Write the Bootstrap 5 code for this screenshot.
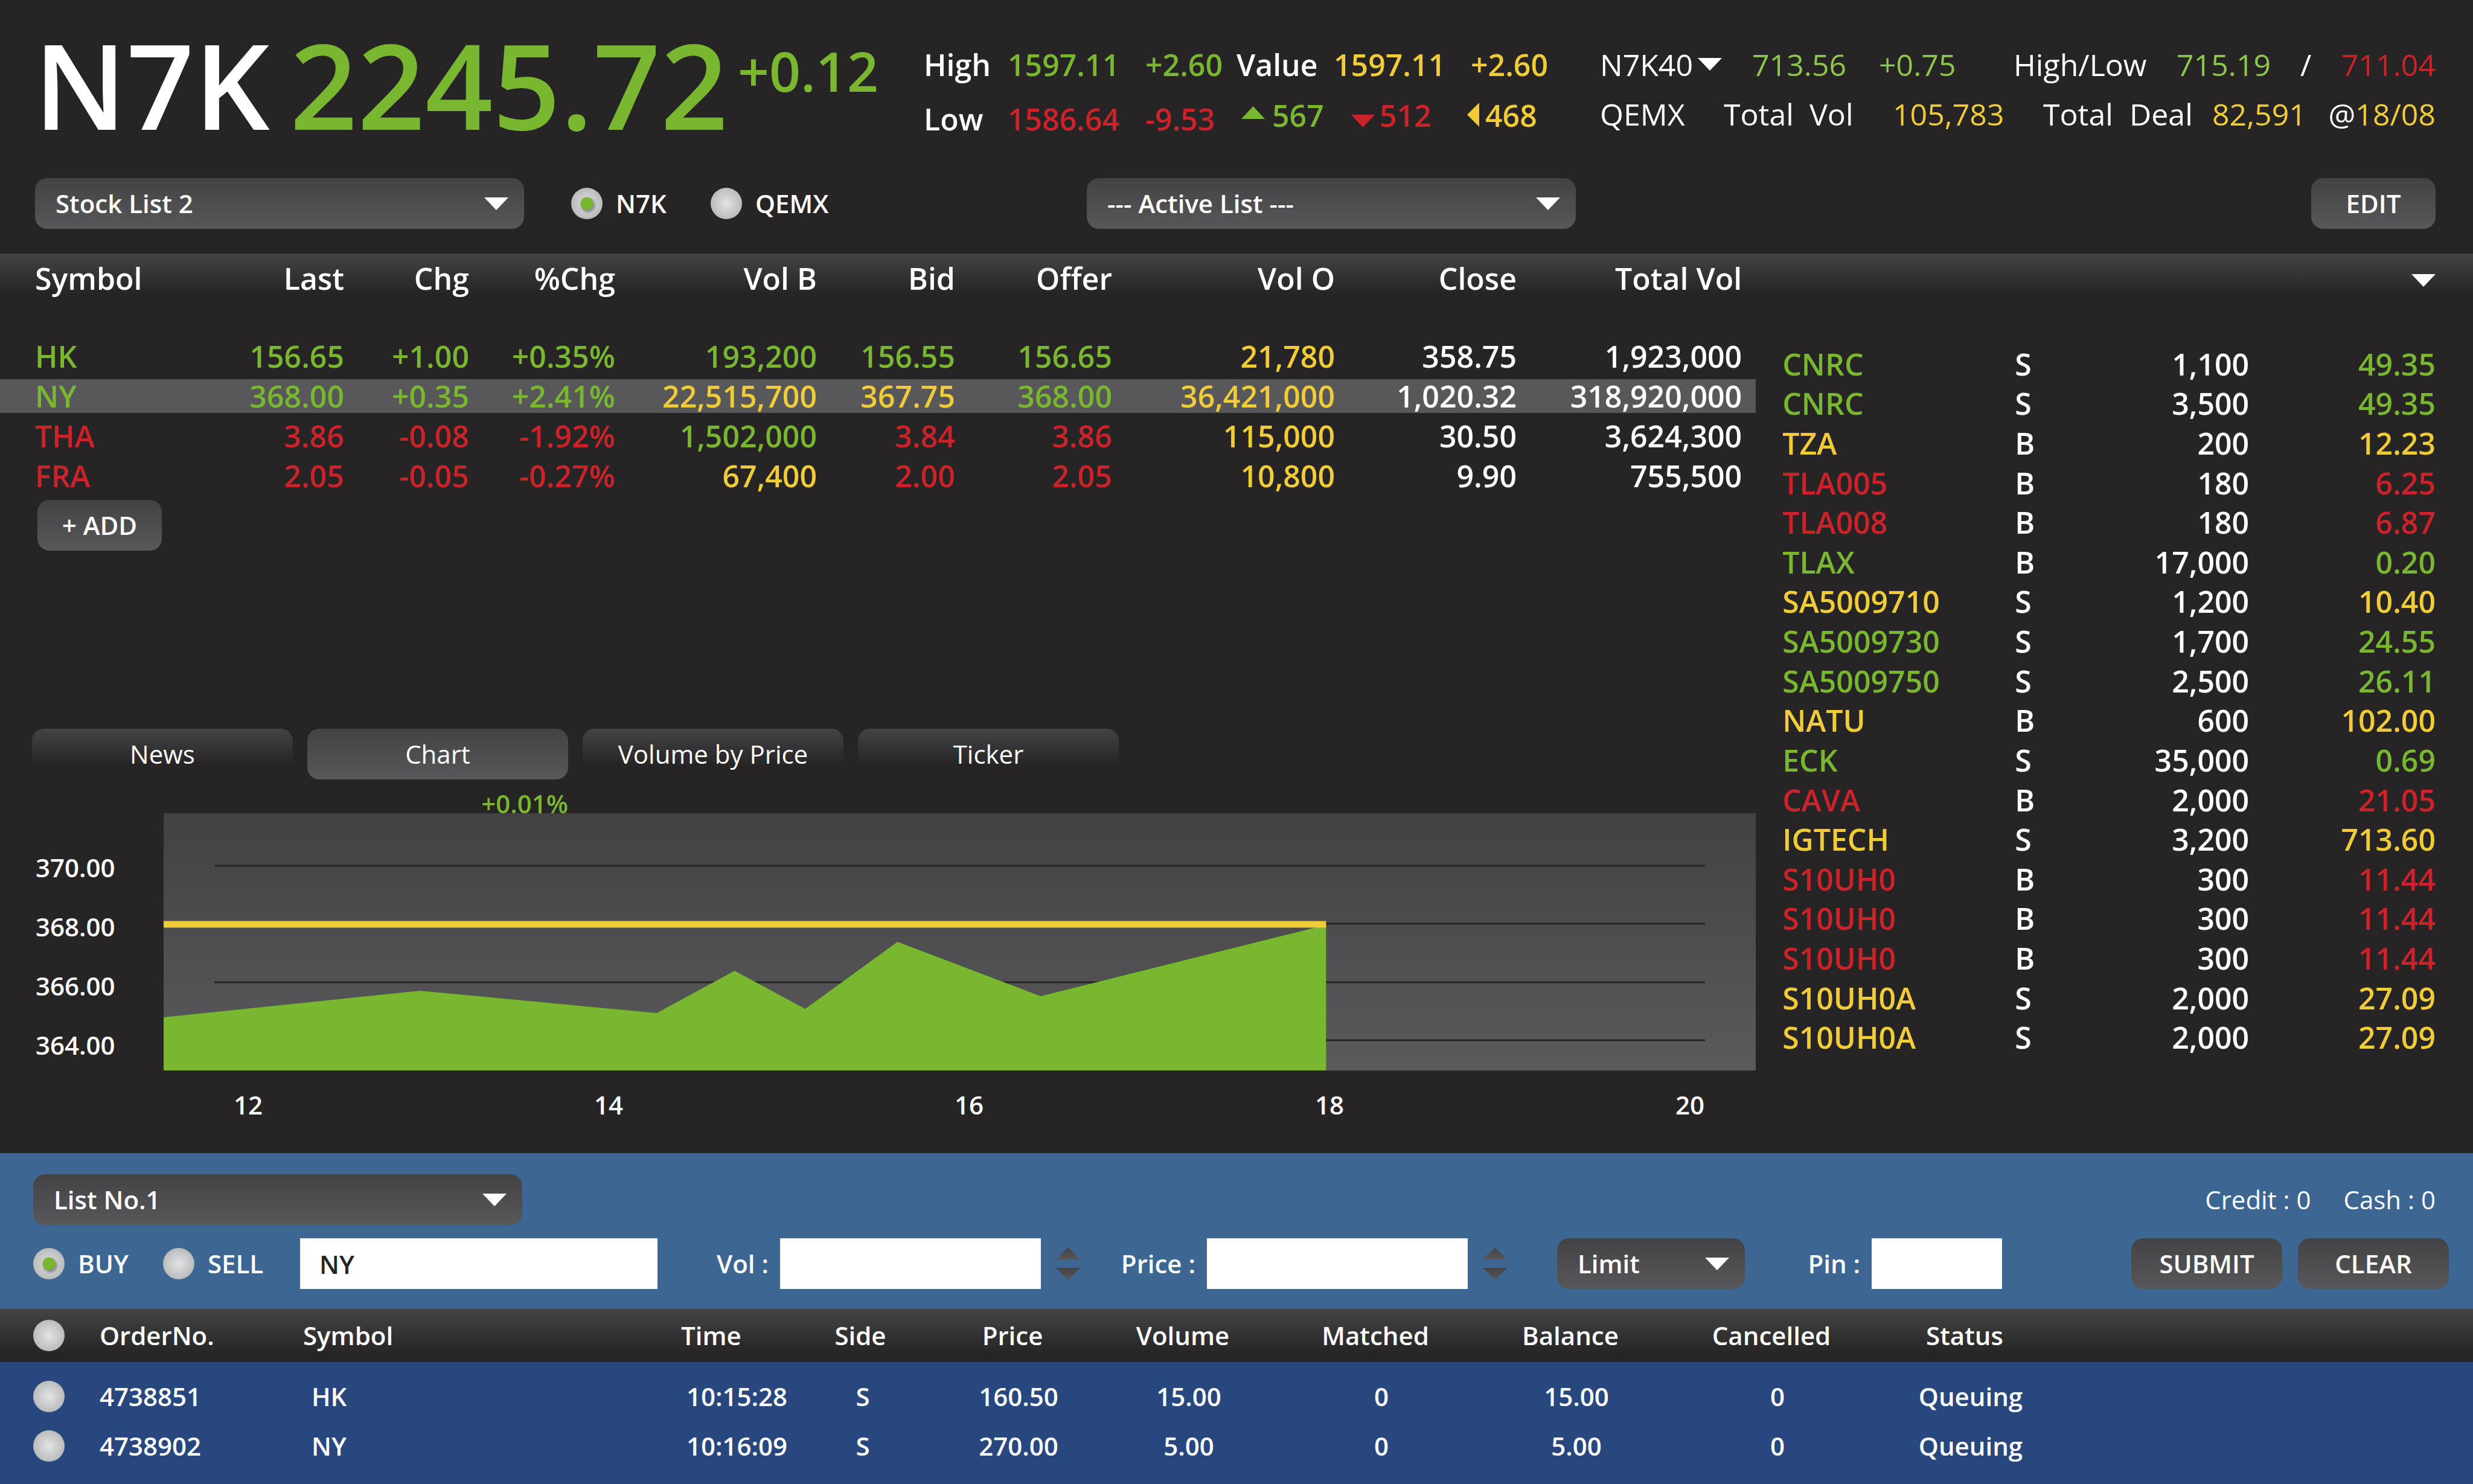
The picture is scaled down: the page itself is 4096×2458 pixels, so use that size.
<!DOCTYPE html>
<html lang="en">
<head>
<meta charset="utf-8">
<meta name="viewport" content="width=device-width, initial-scale=1">
<title>N7K Stock Trading</title>
<link href="https://cdn.jsdelivr.net/npm/bootstrap@5.3.0/dist/css/bootstrap.min.css" rel="stylesheet">
<style>
  :root {
    --ink: #262425;
    --up: #79b730;
    --up-soft: #8dc64a;
    --down: #cc2229;
    --flat: #f0cc38;
    --btn-face: linear-gradient(#434345, #58585a);
    --bar-face: linear-gradient(#444446, #262425 85%);
  }
  body {
    background: var(--ink);
    color: #fff;
    font-family: "Open Sans", "Noto Sans", sans-serif;
    font-size: 42px;
    font-weight: 600;
    line-height: 56px;
  }
  .up { color: var(--up) !important; }
  .up-soft { color: var(--up-soft) !important; }
  .down { color: var(--down) !important; }
  .flat { color: var(--flat) !important; }
  svg { display: block; flex: none; }

  /* header */
  .topline { height: 295px; font-size: 50px; white-space: nowrap; }
  .index-name { width: 424px; margin-left: 56px; font-size: 196px; line-height: 278px; }
  .index-value { width: 742px; font-size: 196px; line-height: 278px; }
  .index-change { width: 308px; font-size: 91px; line-height: 234px; }
  .cells { display: grid; }
  .highlow { width: 518px; padding-top: 62px; line-height: 90px; }
  .highlow .cells { grid-template-columns: 139px 228px 1fr; }
  .breadth { width: 602px; padding-top: 65px; line-height: 84px; }
  .breadth .value-row { grid-template-columns: 161px 227px 1fr; }
  .breadth .count-row { grid-template-columns: 182px 192px 1fr; padding-left: 8px; }
  .markets { padding: 66px 62px 0 0; font-weight: 400; line-height: 82px; }
  .markets .first-row { grid-template-columns: 252px 210px 223px 270px 205px 1fr; }
  .markets .second-row { grid-template-columns: 205px 142px 138px 249px 143px 137px 1fr auto; }
  .plain-btn { background: none; border: 0; padding: 0; color: inherit; font: inherit; line-height: inherit; }

  /* controls */
  .pick, .face-btn {
    height: 84px;
    border: 0;
    border-radius: 20px;
    color: #fff;
    font-size: 42px;
    font-weight: 600;
    line-height: 56px;
  }
  .pick {
    width: 810px;
    padding: 0 90px 0 34px;
    background: url("data:image/svg+xml,%3Csvg xmlns='http://www.w3.org/2000/svg' viewBox='0 0 40 21'%3E%3Cpath fill='%23fff' d='M0 0h40L20 21z'/%3E%3C/svg%3E") no-repeat right 26px center / 40px 21px, var(--btn-face);
  }
  .face-btn { background: var(--btn-face); padding: 0; }
  .face-btn:hover { color: #fff; background: var(--btn-face); }
  .edit-btn { width: 206px; }
  .dot {
    width: 52px; height: 52px; margin: 0; border: 0; flex: none;
    background: radial-gradient(circle, #e3e4e6, #b9babc 72%);
    border-radius: 50% !important;
  }
  .dot:checked {
    background:
      radial-gradient(circle, var(--up) 10px, transparent 11px),
      radial-gradient(circle at 28px 29px, #8e8f91 9px, transparent 14px),
      radial-gradient(circle, #dcdddf, #b9babc 72%);
  }
  .controls { padding: 0 62px 0 58px; margin-bottom: 41px; }
  .controls .lists { width: 1742px; }
  .radio-pair { gap: 22px; }
  .controls .radio-pair { width: 231px; }
  .controls .pick + .radio-pair { margin-left: 78px; }

  /* market area */
  .market { background: var(--bar-face) top / 100% 78px no-repeat; }
  .watch { flex: 0 0 71%; }
  .sheet { margin: 0; table-layout: fixed; border-collapse: separate; border-spacing: 0; --bs-table-bg: transparent; --bs-table-color: #fff; color: #fff; }
  .sheet > :not(caption) > * > * { padding: 0; border-width: 0; font-weight: 600; color: #fff; box-shadow: none; vertical-align: middle; }
  .quotes { font-size: 50px; text-align: right; }
  .quotes > thead > tr > th { height: 137px; padding-bottom: 56px; }
  .quotes > tbody > tr > td { height: 66px; border-block: 5px solid transparent; background-clip: padding-box; }
  .quotes > tbody > tr.picked > td { background-color: #58585a; }
  .quotes > * > tr > :first-child { padding-left: 58px; text-align: left; }
  .quotes > * > tr > :last-child { padding-right: 23px; }
  .quotes col:nth-child(1) { width: 300px; }
  .quotes col:nth-child(2) { width: 270px; }
  .quotes col:nth-child(3) { width: 207px; }
  .quotes col:nth-child(4) { width: 242px; }
  .quotes col:nth-child(5) { width: 334px; }
  .quotes col:nth-child(6) { width: 229px; }
  .quotes col:nth-child(7) { width: 260px; }
  .quotes col:nth-child(8) { width: 369px; }
  .quotes col:nth-child(9) { width: 301px; }
  .add-btn { width: 206px; margin: 7px 0 0 62px; }
  .view-tabs { gap: 24px; padding-left: 53px; }
  .view-tabs .tab-btn {
    width: 432px; height: 84px; border: 0; border-radius: 20px; color: #fff;
    background: linear-gradient(#434345, #262425 72%);
  }
  .view-tabs .tab-btn.active { background: var(--btn-face); }
  .chart-change { width: 941px; padding-top: 24px; line-height: 32px; text-align: right; }
  .scale-y { width: 271px; height: 426px; padding: 41px 0 0 59px; }
  .scale-y div { height: 98px; line-height: 98px; }
  .plot { height: 426px; width: 100%; }
  .scale-x { padding: 28px 0 51px 387px; line-height: 58px; }
  .scale-x div { width: 597px; }
  .scale-x div:last-child { width: auto; }
  .deals-head { height: 78px; padding: 34px 62px 0 0; }
  .deals { font-size: 50px; height: 1181px; margin-top: 72px; }
  .deals col:nth-child(1) { width: 429px; }
  .deals col:nth-child(2) { width: 120px; }
  .deals col:nth-child(3) { width: 268px; }
  .deals > tbody > tr > td:first-child { padding-left: 44px; }
  .deals > tbody > tr > td:last-child { padding-right: 62px; }

  /* order entry */
  .entry { background: #3d6692; padding: 35px 40px 33px 55px; }
  .entry .balances { margin-right: 22px; gap: 54px; font-weight: 400; }
  .entry-form { margin-top: 22px; }
  .entry-form .radio-pair { width: 215px; }
  .entry-form .radio-pair + .radio-pair { width: 227px; }
  .box { height: 84px; border: 0; border-radius: 0; background: #fff; color: var(--ink); font-size: 42px; font-weight: 600; padding: 0 32px; }
  .box-name { width: 592px; }
  .box-num { width: 432px; }
  .box-pin { width: 216px; }
  .box-label { width: 210px; padding-right: 19px; text-align: right; }
  .box-name + .box-label { width: 203px; }
  .stepper { width: 40px; margin-left: 25px; gap: 14px; }
  .type-pick { width: 311px; margin-left: 83px; }
  .send-row { gap: 26px; }
  .send-btn { width: 250px; }

  /* orders */
  .order-area { background: #28477f; padding-bottom: 22px; }
  .orders { text-align: center; }
  .orders > thead { background: var(--bar-face); }
  .orders > thead > tr > th { height: 88px; }
  .orders > tbody > tr > td { height: 82px; padding-left: 20px; }
  .orders > tbody > tr:first-child > td { height: 98px; padding-top: 16px; }
  .orders > * > tr > :nth-child(1) { padding-left: 55px; }
  .orders > * > tr > :nth-child(2) { padding-left: 0; }
  .orders > * > tr > :nth-child(-n+4) { text-align: left; }
  .orders > tbody > tr > :nth-child(3) { padding-left: 14px; }
  .orders > tbody > tr > :nth-child(4) { padding-left: 9px; }
  .orders > tbody > tr > :nth-child(5) { padding-left: 8px; }
  .orders col:nth-child(1) { width: 165px; }
  .orders col:nth-child(2) { width: 337px; }
  .orders col:nth-child(3) { width: 626px; }
  .orders col:nth-child(4) { width: 182px; }
  .orders col:nth-child(5) { width: 230px; }
  .orders col:nth-child(6) { width: 274px; }
  .orders col:nth-child(7) { width: 290px; }
  .orders col:nth-child(8) { width: 348px; }
  .orders col:nth-child(9) { width: 298px; }
  .orders col:nth-child(10) { width: 368px; }
  .orders col:nth-child(11) { width: 272px; }
</style>
</head>
<body class="d-flex flex-column min-vh-100">

<header class="topline d-flex align-items-start">
  <div class="index-name">N7K</div>
  <div class="index-value up">2245.72</div>
  <div class="index-change up">+0.12</div>
  <div class="highlow">
    <div class="cells"><span>High</span><span class="up">1597.11</span><span class="up">+2.60</span></div>
    <div class="cells"><span>Low</span><span class="down">1586.64</span><span class="down">-9.53</span></div>
  </div>
  <div class="breadth">
    <div class="cells value-row"><span>Value</span><span class="flat">1597.11</span><span class="flat">+2.60</span></div>
    <div class="cells count-row">
      <span class="up d-flex align-items-center"><svg width="51" height="42" aria-hidden="true"><path d="M0 27h39L19.500 6z" fill="currentColor"/></svg>567</span>
      <span class="down d-flex align-items-center"><svg width="47" height="42" aria-hidden="true"><path d="M0 20h39L19.500 41z" fill="currentColor"/></svg>512</span>
      <span class="flat d-flex align-items-center"><svg width="30" height="42" aria-hidden="true"><path d="M20 0v40L0 20z" fill="currentColor"/></svg>468</span>
    </div>
  </div>
  <div class="markets flex-fill">
    <div class="cells first-row">
      <button class="plain-btn d-flex align-items-center" type="button">N7K40<svg class="ms-2" width="40" height="22" aria-hidden="true"><path d="M0 0h40L20 21z" fill="#fff"/></svg></button>
      <span class="up-soft">713.56</span><span class="up-soft">+0.75</span><span>High/Low</span><span class="up-soft">715.19</span>
      <span class="d-flex justify-content-between"><span>/</span><span class="down">711.04</span></span>
    </div>
    <div class="cells second-row">
      <span>QEMX</span><span>Total</span><span>Vol</span><span class="flat">105,783</span><span>Total</span><span>Deal</span><span class="flat">82,591</span><span>@<span class="flat">18/08</span></span>
    </div>
  </div>
</header>

<div class="controls d-flex align-items-center">
  <div class="lists d-flex align-items-center">
    <select class="form-select pick" aria-label="Stock list"><option>Stock List 2</option></select>
    <div class="radio-pair d-flex align-items-center"><input class="form-check-input dot" type="radio" name="board" id="b1" checked><label for="b1">N7K</label></div>
    <div class="radio-pair d-flex align-items-center"><input class="form-check-input dot" type="radio" name="board" id="b2"><label for="b2">QEMX</label></div>
  </div>
  <select class="form-select pick" aria-label="Active list"><option>--- Active List ---</option></select>
  <button class="btn face-btn edit-btn ms-auto" type="button">EDIT</button>
</div>

<main class="market d-flex flex-grow-1">
  <section class="watch d-flex flex-column">
    <table class="table sheet quotes">
      <colgroup><col><col><col><col><col><col><col><col><col><col></colgroup>
      <thead><tr><th>Symbol</th><th>Last</th><th>Chg</th><th>%Chg</th><th>Vol B</th><th>Bid</th><th>Offer</th><th>Vol O</th><th>Close</th><th>Total Vol</th></tr></thead>
      <tbody>
        <tr><td class="up">HK</td><td class="up">156.65</td><td class="up">+1.00</td><td class="up">+0.35%</td><td class="up">193,200</td><td class="up">156.55</td><td class="up">156.65</td><td class="flat">21,780</td><td>358.75</td><td>1,923,000</td></tr>
        <tr class="picked"><td class="up">NY</td><td class="up">368.00</td><td class="up">+0.35</td><td class="up">+2.41%</td><td class="flat">22,515,700</td><td class="flat">367.75</td><td class="up">368.00</td><td class="flat">36,421,000</td><td>1,020.32</td><td>318,920,000</td></tr>
        <tr><td class="down">THA</td><td class="down">3.86</td><td class="down">-0.08</td><td class="down">-1.92%</td><td class="up">1,502,000</td><td class="down">3.84</td><td class="down">3.86</td><td class="flat">115,000</td><td>30.50</td><td>3,624,300</td></tr>
        <tr><td class="down">FRA</td><td class="down">2.05</td><td class="down">-0.05</td><td class="down">-0.27%</td><td class="flat">67,400</td><td class="down">2.00</td><td class="down">2.05</td><td class="flat">10,800</td><td>9.90</td><td>755,500</td></tr>
      </tbody>
    </table>
    <button class="btn face-btn add-btn" type="button">+ ADD</button>

    <div class="mt-auto">
      <div class="view-tabs nav" role="tablist">
        <button class="tab-btn" type="button" role="tab">News</button>
        <button class="tab-btn active" type="button" role="tab" aria-selected="true">Chart</button>
        <button class="tab-btn" type="button" role="tab">Volume by Price</button>
        <button class="tab-btn" type="button" role="tab">Ticker</button>
      </div>
      <div class="chart-change up">+0.01%</div>
      <div class="d-flex">
        <div class="scale-y flex-shrink-0"><div>370.00</div><div>368.00</div><div>366.00</div><div>364.00</div></div>
        <svg class="plot flex-shrink-1" viewBox="0 0 2638 426" preserveAspectRatio="none" role="img" aria-label="NY price by hour">
          <defs><linearGradient id="plotFace" x1="0" y1="0" x2="0" y2="1"><stop offset="0" stop-color="#424244"/><stop offset="1" stop-color="#5a5a5c"/></linearGradient></defs>
          <rect width="2638" height="426" fill="url(#plotFace)"/>
          <path d="M84 87H2554M84 183H2554M84 280H2554M84 376H2554" stroke="#262425" stroke-width="3"/>
          <path d="M0 338L425 294L817 331L946 261L1063 324L1216 213L1453 303L1926 185V426H0z" fill="#79b730"/>
          <path d="M0 184H1926" stroke="#f0cc38" stroke-width="11"/>
        </svg>
      </div>
      <div class="scale-x d-flex"><div>12</div><div>14</div><div>16</div><div>18</div><div>20</div></div>
    </div>
  </section>

  <section class="flex-grow-1">
    <div class="deals-head d-flex justify-content-end align-items-start">
      <button class="plain-btn" type="button" aria-label="Open deal filter"><svg width="40" height="21"><path d="M0 0h40L20 21z" fill="#fff"/></svg></button>
    </div>
    <table class="table sheet deals">
      <colgroup><col><col><col><col></colgroup>
      <tbody id="deals"></tbody>
    </table>
  </section>
</main>

<section class="entry">
  <div class="d-flex align-items-center justify-content-between">
    <select class="form-select pick" aria-label="Order list"><option>List No.1</option></select>
    <div class="balances d-flex"><span>Credit : 0</span><span>Cash : 0</span></div>
  </div>
  <form class="entry-form d-flex align-items-center">
    <div class="radio-pair d-flex align-items-center"><input class="form-check-input dot" type="radio" name="side" id="s1" checked><label for="s1">BUY</label></div>
    <div class="radio-pair d-flex align-items-center"><input class="form-check-input dot" type="radio" name="side" id="s2"><label for="s2">SELL</label></div>
    <input class="form-control box box-name" type="text" value="NY" aria-label="Symbol">
    <label class="box-label" for="vol">Vol :</label>
    <input class="form-control box box-num" type="text" id="vol">
    <div class="stepper d-flex flex-column">
      <button class="plain-btn" type="button" aria-label="More volume"><svg width="40" height="20"><path d="M0 20h40L20 0z" fill="url(#stepFace)"/></svg></button>
      <button class="plain-btn" type="button" aria-label="Less volume"><svg width="40" height="20"><path d="M0 0h40L20 20z" fill="url(#stepFace)"/></svg></button>
    </div>
    <label class="box-label" for="price">Price :</label>
    <input class="form-control box box-num" type="text" id="price">
    <div class="stepper d-flex flex-column">
      <button class="plain-btn" type="button" aria-label="Higher price"><svg width="40" height="20"><path d="M0 20h40L20 0z" fill="url(#stepFace)"/></svg></button>
      <button class="plain-btn" type="button" aria-label="Lower price"><svg width="40" height="20"><defs><linearGradient id="stepFace" x1="0" y1="0" x2="0" y2="1"><stop offset="0" stop-color="#434345"/><stop offset="1" stop-color="#58585a"/></linearGradient></defs><path d="M0 0h40L20 20z" fill="url(#stepFace)"/></svg></button>
    </div>
    <select class="form-select pick type-pick" aria-label="Order type"><option>Limit</option></select>
    <label class="box-label" for="pin">Pin :</label>
    <input class="form-control box box-pin" type="password" id="pin">
    <div class="send-row d-flex ms-auto">
      <button class="btn face-btn send-btn" type="button">SUBMIT</button>
      <button class="btn face-btn send-btn" type="reset">CLEAR</button>
    </div>
  </form>
</section>

<section class="order-area">
  <table class="table sheet orders">
    <colgroup><col><col><col><col><col><col><col><col><col><col><col><col></colgroup>
    <thead><tr>
      <th><input class="form-check-input dot d-block" type="checkbox" aria-label="Select all orders"></th>
      <th>OrderNo.</th><th>Symbol</th><th>Time</th><th>Side</th><th>Price</th><th>Volume</th><th>Matched</th><th>Balance</th><th>Cancelled</th><th>Status</th><th></th>
    </tr></thead>
    <tbody>
      <tr><td><input class="form-check-input dot d-block" type="checkbox" aria-label="Select order 4738851"></td><td>4738851</td><td>HK</td><td>10:15:28</td><td>S</td><td>160.50</td><td>15.00</td><td>0</td><td>15.00</td><td>0</td><td>Queuing</td><td></td></tr>
      <tr><td><input class="form-check-input dot d-block" type="checkbox" aria-label="Select order 4738902"></td><td>4738902</td><td>NY</td><td>10:16:09</td><td>S</td><td>270.00</td><td>5.00</td><td>0</td><td>5.00</td><td>0</td><td>Queuing</td><td></td></tr>
    </tbody>
  </table>
</section>

<script src="https://cdn.jsdelivr.net/npm/bootstrap@5.3.0/dist/js/bootstrap.bundle.min.js"></script>
<script>
  const deals = [
    ["up", "CNRC", "S", "1,100", "49.35"],
    ["up", "CNRC", "S", "3,500", "49.35"],
    ["flat", "TZA", "B", "200", "12.23"],
    ["down", "TLA005", "B", "180", "6.25"],
    ["down", "TLA008", "B", "180", "6.87"],
    ["up", "TLAX", "B", "17,000", "0.20"],
    ["flat", "SA5009710", "S", "1,200", "10.40"],
    ["up", "SA5009730", "S", "1,700", "24.55"],
    ["up", "SA5009750", "S", "2,500", "26.11"],
    ["flat", "NATU", "B", "600", "102.00"],
    ["up", "ECK", "S", "35,000", "0.69"],
    ["down", "CAVA", "B", "2,000", "21.05"],
    ["flat", "IGTECH", "S", "3,200", "713.60"],
    ["down", "S10UH0", "B", "300", "11.44"],
    ["down", "S10UH0", "B", "300", "11.44"],
    ["down", "S10UH0", "B", "300", "11.44"],
    ["flat", "S10UH0A", "S", "2,000", "27.09"],
    ["flat", "S10UH0A", "S", "2,000", "27.09"]
  ];
  document.getElementById("deals").innerHTML = deals.map(([tone, name, side, qty, price]) =>
    `<tr><td class="${tone}">${name}</td><td>${side}</td><td class="text-end">${qty}</td><td class="${tone} text-end">${price}</td></tr>`).join("");
</script>
</body>
</html>
